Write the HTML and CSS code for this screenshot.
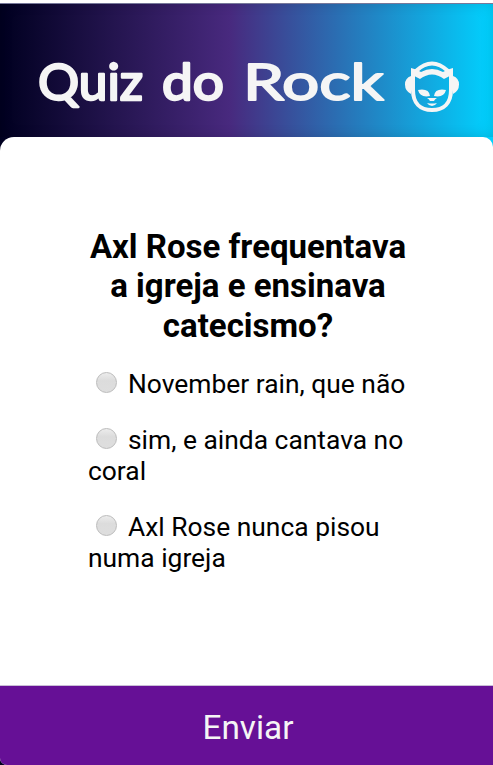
FILE: index.html
```html
<!DOCTYPE html>
<html lang="pt-BR">
<head>
<meta charset="utf-8">
<title>Quiz do Rock</title>
<link rel="stylesheet" href="styles.css">
</head>
<body>
<header class="header">
  <svg class="title" width="350" height="60" viewBox="0 0 350 60" role="heading" aria-level="1">
    <text y="47.500"><tspan class="heavy" x="1" textLength="105" lengthAdjust="spacingAndGlyphs">Quiz</tspan> <tspan class="heavy" x="125" textLength="62" lengthAdjust="spacingAndGlyphs">do</tspan> <tspan x="206" textLength="141" lengthAdjust="spacingAndGlyphs">Rock</tspan></text>
  </svg>
  <svg class="logo" width="54" height="52" viewBox="0 0 54 52" aria-hidden="true">
    <path class="line" d="M8 10V29C8 42 15 49 27 49S46 42 46 29V10M11 10Q27-5 43 10"/>
    <path class="fill" d="M6 15v18Q0 30 0 23.500T6 15zM48 15v18q6-3 6-9.500T48 15zM6 7q5 1 10 4 11-6 22 0 5-3 10-4v7q-4 1-9 4-12-9-24 0-5-3-9-4z"/>
    <path class="fill" d="M13 29q11-2 12 6-10 2-12-6zM41 29q-11-2-12 6 10 2 12-6zM22 37h10q-2 1-3 3h-4q-1-2-3-3zM22 42q5 1 10 0-2 3-5 3t-5-3z"/>
  </svg>
</header>
<main class="card">
  <form class="quiz">
    <h2 class="question">Axl Rose frequentava a igreja e ensinava catecismo?</h2>
    <label class="option"><input class="radio" type="radio" name="answer">November rain, que não</label>
    <label class="option"><input class="radio" type="radio" name="answer">sim, e ainda cantava no coral</label>
    <label class="option"><input class="radio" type="radio" name="answer">Axl Rose nunca pisou numa igreja</label>
  </form>
  <button class="submit" type="button">Enviar</button>
</main>
</body>
</html>
```
FILE: styles.css
```css
* { box-sizing: border-box; }
body {
  margin: 0;
  height: 765px;
  overflow: hidden;
  display: flex;
  flex-direction: column;
  border-top: 3px solid #fff;
  font-family: Roboto, sans-serif;
  background: linear-gradient(90deg, #000020 0%, #48297e 46.5%, #00d2ff 100%);
}
.header {
  height: 134px;
  flex: none;
  padding: 49px 0 0 37px;
  display: flex;
  gap: 18px;
  box-shadow: inset 0 1px #77789a, inset 0 0 16px -3px #0003;
}
.title {
  overflow: visible;
  font-family: Lato, sans-serif;
  font-size: 51px;
  fill: #f5f5f5;
  stroke: #f5f5f5;
  stroke-width: 1.8px;
  stroke-linejoin: round;
}
.heavy { stroke-width: 2.4px; }
.logo { margin-top: 9px; }
.fill { fill: #f5f5f5; }
.line { fill: none; stroke: #f5f5f5; stroke-width: 4px; }
.card {
  flex: 1;
  display: flex;
  flex-direction: column;
  border-radius: 14px 10px 0 7px;
  background: #fff;
  overflow: hidden;
}
.quiz {
  flex: 1;
  width: 320px;
  margin-left: 88px;
  padding-top: 89.7px;
}
.question {
  margin: 0 0 23.6px;
  font-size: 33px;
  line-height: 39.7px;
  font-weight: 700;
  text-align: center;
}
.option {
  display: block;
  margin-bottom: 24.6px;
  font-size: 26.4px;
  line-height: 31.2px;
}
.radio {
  appearance: none;
  width: 21px;
  height: 21px;
  margin: 0 11px 0 8px;
  border: 1px solid #bbb;
  border-radius: 50%;
  background: linear-gradient(#ececec, #dcdcdc 40%, #dedede);
}
.submit {
  height: 80px;
  padding: 4px 0 0 3px;
  border: 0;
  border-top: 1px solid #c9bed6;
  background: #661096;
  color: #f5f5f5;
  font: 33.3px Roboto, sans-serif;
}
```
